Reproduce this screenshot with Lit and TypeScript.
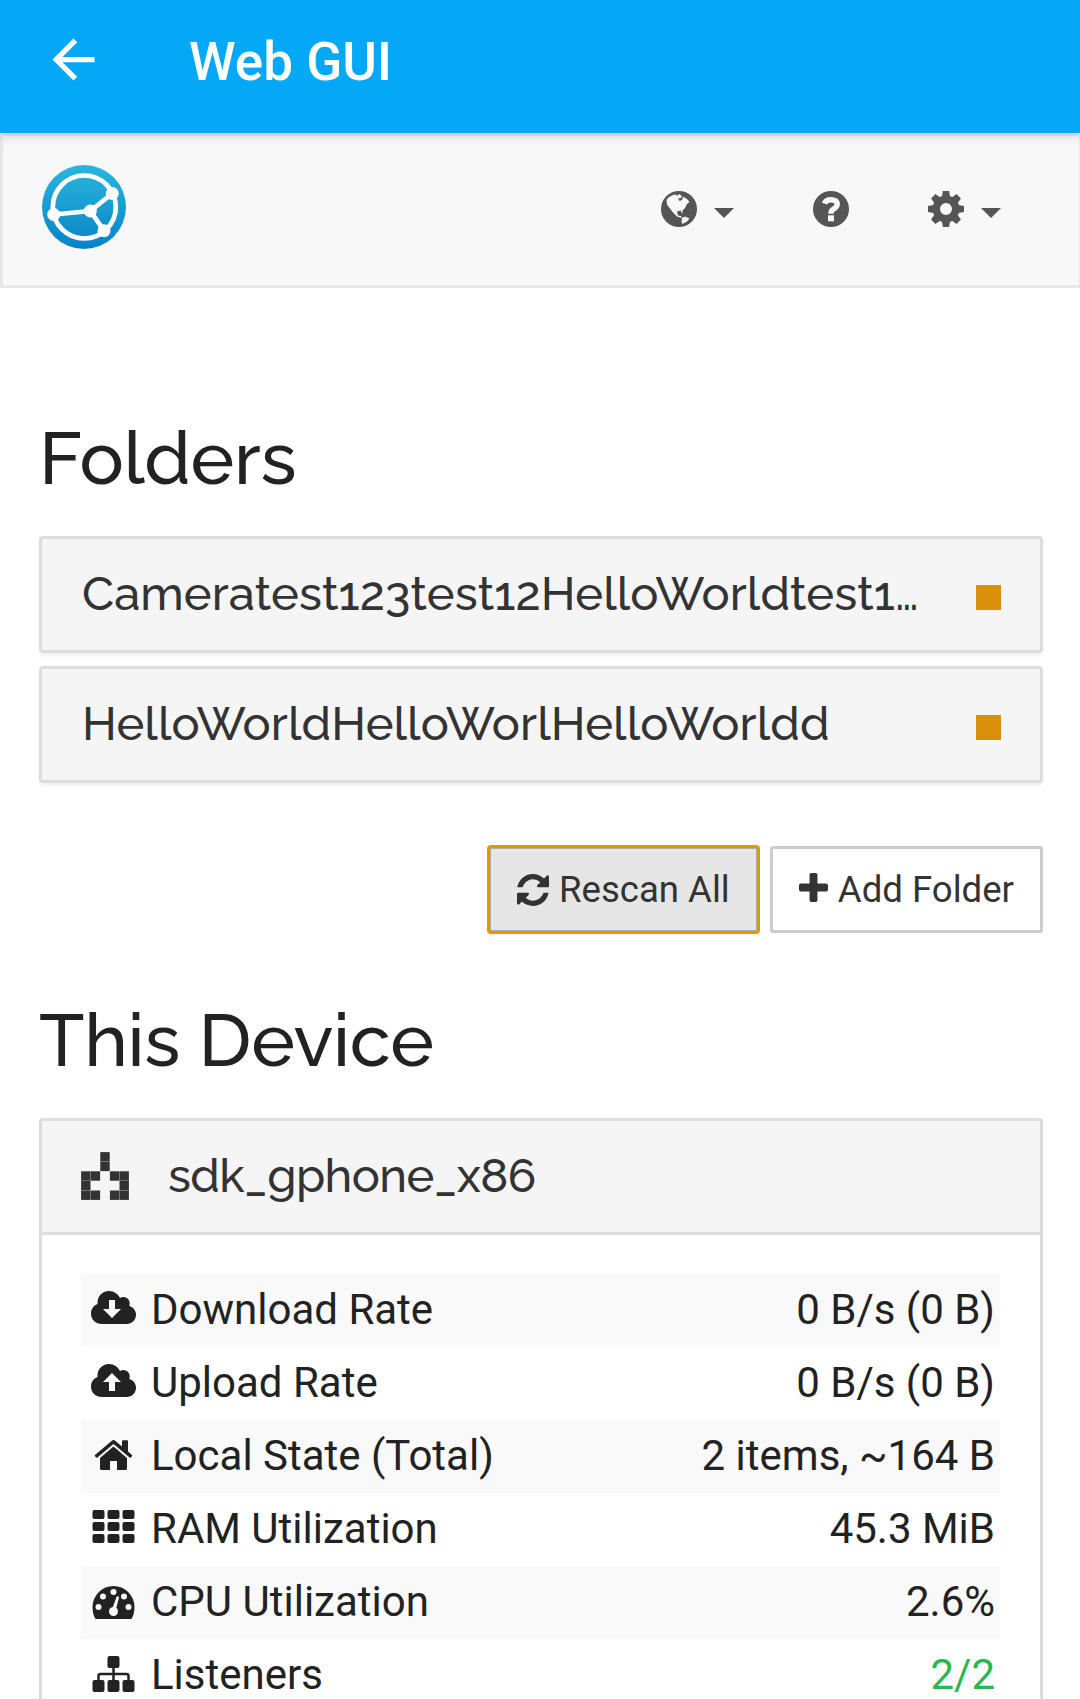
import { LitElement, html, css, svg } from "lit";
import { customElement } from "lit/decorators.js";

const icons: Record<string, [string, string, unknown]> = {
  back: ["0 0 24 24", "back", svg`<path d="M20 11H7.83l5.59-5.59L12 4l-8 8 8 8 1.41-1.41L7.83 13H20z"/>`],
  globe: ["0 0 36 36", "nav-icon", svg`<circle cx="18" cy="18" r="18"/><path class="cut" d="M5.500 9L8 6l4-2 3-.5 1 1.500 2-2 3 2-1 2-3 .5 1.500 2.500 2.500-1 1-3.500 4 2.500 2.500 3L26 13l-2 4-2.500 2.500 0 3.500-2-3.500-3.500 1 1 4 3 .5 1 2-5-1.500-4-4-3-4-3-4zM21 27l3-1.500 4.500 2-2.500 3-4.500 2.500-1-2z"/>`],
  help: ["0 0 36 36", "nav-icon", svg`<circle cx="18" cy="18" r="18"/><path class="cut-line" d="M11.500 12.700c1-3 3.300-4 6.200-4 4 0 6.500 1.600 6.500 4.500 0 4.500-6.200 4.500-6.200 8.600v1"/><path class="cut" d="M15 24.300h6v6h-6z"/>`],
  gear: ["0 0 36 36", "nav-icon", svg`<circle class="hub" cx="18" cy="18" r="9.700"/>${[0, 45, 90, 135, 180, 225, 270, 315].map(a => svg`<path transform="rotate(${a} 18 18)" d="M13.700 7L14.900 0h6.200l1.200 7z"/>`)}`],
  refresh: ["0 0 1536 1536", "btn-icon", svg`<path d="M1511 928q0 5-1 7-64 268-268 434.500T764 1536q-146 0-282.500-55T238 1324l-129 129q-19 19-45 19t-45-19-19-45V960q0-26 19-45t45-19h448q26 0 45 19t19 45-19 45l-137 137q71 66 161 102t187 36q134 0 250-65t186-179q11-17 53-117 8-23 30-23h192q13 0 22.500 9.500t9.500 22.500zm25-800v448q0 26-19 45t-45 19h-448q-26 0-45-19t-19-45 19-45l138-138Q969 256 768 256q-134 0-250 65T332 500q-11 17-53 117-8 23-30 23H50q-13 0-22.500-9.500T18 608v-7q65-268 270-434.500T768 0q146 0 284 55.500T1297 212l130-129q19-19 45-19t45 19 19 45z"/>`],
  plus: ["0 0 1408 1408", "plus-icon", svg`<path d="M1408 608v192q0 40-28 68t-68 28H896v416q0 40-28 68t-68 28H608q-40 0-68-28t-28-68V896H96q-40 0-68-28T0 800V608q0-40 28-68t68-28h416V96q0-40 28-68t68-28h192q40 0 68 28t28 68v416h416q40 0 68 28t28 68z"/>`],
  down: ["0 0 45 33", "row-icon", svg`<path d="M11 33C4.500 33 0 28.500 0 22.500c0-4.500 2.500-8 6.500-9.500C6 5.500 11 0 18 0c5 0 9 3 11 7 5.500-3 11.500 2 9.300 8C42 16 45 19.500 45 23.500 45 29 41 33 35.500 33z"/><path class="cut" d="M18 9h6v9h6l-9 9-9-9h6z"/>`],
  up: ["0 0 45 33", "row-icon", svg`<path d="M11 33C4.500 33 0 28.500 0 22.500c0-4.500 2.500-8 6.500-9.500C6 5.500 11 0 18 0c5 0 9 3 11 7 5.500-3 11.500 2 9.300 8C42 16 45 19.500 45 23.500 45 29 41 33 35.500 33z"/><path class="cut" d="M18 27h6v-9h6l-9-9-9 9h6z"/>`],
  home: ["0 0 45 33", "row-icon low", svg`<path d="M22.500 6.500L36 18v10.500q0 1.500-1.500 1.500H26v-9h-7v9h-8.500Q9 30 9 28.500V18z"/><path d="M20.800.700q1.700-1.300 3.400 0L31 6.500V1q0-.8.800-.8h4.400q.8 0 .8.800v10.500l4 3.500q.6.600 0 1.200L39.800 17.500q-.6.500-1.200 0L22.500 4 6.400 17.500q-.6.500-1.200 0L4 16.200q-.6-.6 0-1.200z"/>`],
  grid: ["0 0 45 33", "row-icon", [0, 12, 24].map(y => [1.500, 16.500, 31.500].map(x => svg`<rect x=${x} y=${y} width="12" height="9" rx="2"/>`))],
  gauge: ["0 0 45 33", "row-icon low", svg`<path d="M4.500 33Q1.500 28 1.500 21a21 21 0 0 1 42 0q0 7-3 12z"/><g class="cut"><circle cx="7.500" cy="21" r="3"/><circle cx="12" cy="10.500" r="3"/><circle cx="22.500" cy="6" r="3"/><circle cx="33" cy="10.500" r="3"/><circle cx="37.500" cy="21" r="3"/><circle cx="22.500" cy="25.500" r="4.500"/><path d="M21.500 22l4-11q.5-1 1.500-.7t1 1.500L25 23z"/></g>`],
  tree: ["0 0 45 36", "row-icon tall", svg`<rect x="16.500" width="12" height="12" rx="2"/><rect x="1.500" y="24" width="12" height="12" rx="2"/><rect x="16.500" y="24" width="12" height="12" rx="2"/><rect x="31.500" y="24" width="12" height="12" rx="2"/><path class="wire" d="M22.500 11v14M7.500 25v-5q0-2 2-2h26q2 0 2 2v5"/>`],
  logo: ["0 0 84 84", "logo", svg`<defs><linearGradient id="sky" x1="0" y1="0" x2="0" y2="1"><stop offset="0" stop-color="#29b7dc"/><stop offset="1" stop-color="#0882c8"/></linearGradient></defs><circle cx="42" cy="42" r="42" fill="url(#sky)"/><g class="net"><circle cx="42.300" cy="42" r="31.500"/><path d="M11.700 49.500L48.300 46l22-17.500M48.300 46L62 65.700"/></g><g class="dots"><circle cx="11.700" cy="49.500" r="6.500"/><circle cx="48.300" cy="46" r="6.500"/><circle cx="70.300" cy="28.500" r="6.500"/><circle cx="62" cy="65.700" r="6.500"/></g>`],
  ident: ["0 0 48 48", "ident", [[2, 0], [2, 1], [0, 2], [1, 2], [3, 2], [4, 2], [0, 3], [4, 3], [0, 4], [1, 4], [3, 4], [4, 4]].map(([c, r]) => svg`<rect x=${c * 9.600 + 0.100} y=${r * 9.600 + 0.100} width="9.400" height="9.400"/>`)],
};

const icon = (name: string) => {
  const [box, cls, body] = icons[name];
  return html`<svg class=${cls} viewBox=${box} aria-hidden="true">${body}</svg>`;
};

const rows = [
  ["down", "Download Rate", "0 B/s (0 B)"],
  ["up", "Upload Rate", "0 B/s (0 B)"],
  ["home", "Local State (Total)", "2 items, ~164 B"],
  ["grid", "RAM Utilization", "45.3 MiB"],
  ["gauge", "CPU Utilization", "2.6%"],
  ["tree", "Listeners", "2/2"],
];

@customElement("app-root")
export class AppRoot extends LitElement {
  static styles = css`
    :host { display: block; height: 1699px; overflow: hidden; background: #fff; color: #222; font-family: Roboto, sans-serif; font-size: 42px; }
    * { box-sizing: border-box; }
    svg { display: block; fill: currentColor; flex: none; overflow: visible; }
    h1 { margin: 0; font-weight: 500; }
    .appbar { height: 133px; background: #04a8f7; color: #fff; display: flex; align-items: center; padding: 0 42px 14px; position: relative; box-shadow: 0 3px 10px rgba(0,0,0,.17); }
    .back { width: 63px; height: 63px; }
    .title { font-size: 53px; font-weight: 500; margin-left: 84px; line-height: 62px; padding-top: 5px; }
    .nav { height: 155px; background: #f8f8f8; border: 3px solid #e7e7e7; border-right-width: 1px; display: flex; align-items: flex-start; padding: 29px 78px 0 39px; color: #555; }
    .logo { width: 84px; height: 84px; }
    .net { fill: none; stroke: #fff; stroke-width: 4.700px; }
    .dots { fill: #fff; }
    .menu { margin-left: auto; display: flex; align-items: center; padding-top: 26px; }
    .nav-icon { width: 36px; height: 36px; }
    .hub { fill: none; stroke: currentColor; stroke-width: 7.400px; }
    .cut { fill: #f8f8f8; }
    .cut-line { fill: none; stroke: #f8f8f8; stroke-width: 5.500px; }
    .caret { border: 10.500px solid transparent; border-top-color: #555; border-bottom: 0; margin: 7px 0 0 17px; }
    .nav-icon + .nav-icon, .caret + .nav-icon { margin-left: 79px; }
    .content { padding: 0 37px 0 39px; }
    h1 { font-family: Raleway, Lato, sans-serif; font-size: 74px; letter-spacing: -0.300px; line-height: 84px; padding-top: 128px; }
    h1.device { padding-top: 65px; }
    .panel { border: 3px solid #ddd; border-radius: 4px; box-shadow: 0 3px 3px rgba(0,0,0,.05); background: #f5f5f5; margin-bottom: 13px; height: 117px; display: flex; align-items: center; padding: 0 39px 1px 40px; color: #333; }
    .first { margin-top: 36px; }
    .name { font-family: Raleway, Lato, sans-serif; font-weight: 500; font-size: 47px; letter-spacing: 0.090px; line-height: 56px; white-space: nowrap; }
    .state { width: 25px; height: 25px; background: #d9900d; margin: 7px 0 0 auto; }
    .actions { display: flex; justify-content: flex-end; gap: 11px; margin-top: 63px; }
    .btn { height: 87px; border: 3px solid #ccc; border-radius: 3px; background: #fff; color: #333; font-size: 36.600px; display: flex; align-items: center; padding: 0 26px; }
    .active { background: #e6e6e6; border-color: #adadad; outline: 3px solid #e59700; outline-offset: -2px; }
    .btn-icon { width: 32px; height: 32px; margin-right: 10px; }
    .plus-icon { width: 29px; height: 29px; margin: 0 10px 4px 0; }
    .card { border: 3px solid #ddd; border-radius: 4px; margin-top: 36px; height: 700px; }
    .head { height: 114px; background: #f5f5f5; border-bottom: 3px solid #ddd; color: #333; padding: 0 39px 2px; display: flex; align-items: center; }
    .ident { width: 48px; height: 48px; }
    .head .name { margin-left: 39px; letter-spacing: -0.580px; }
    .table { padding: 39px 40px 0 39px; }
    .row { height: 73px; display: flex; align-items: flex-start; padding: 0 5px 0 10px; --bg: #fff; background: var(--bg); }
    .row:nth-child(odd) { --bg: #f9f9f9; }
    .row .cut { fill: var(--bg); }
    .row-icon { width: 45px; height: 33px; margin: 17px 15px 0 0; }
    .low { margin-top: 20px; }
    .tall { height: 36px; }
    .wire { fill: none; stroke: currentColor; stroke-width: 2.500px; }
    .label, .value { margin-top: 11px; line-height: 49px; }
    .value { margin-left: auto; }
    .row:last-child .value { color: #29b74e; }
  `;

  render() {
    return html`
      <header class="appbar">${icon("back")}<div class="title">Web GUI</div></header>
      <nav class="nav">${icon("logo")}
        <div class="menu">${icon("globe")}<span class="caret"></span>${icon("help")}${icon("gear")}<span class="caret"></span></div>
      </nav>
      <main class="content">
        <h1>Folders</h1>
        <div class="panel first"><span class="name">Cameratest123test12HelloWorldtest1…</span><span class="state"></span></div>
        <div class="panel"><span class="name">HelloWorldHelloWorlHelloWorldd</span><span class="state"></span></div>
        <div class="actions">
          <div class="btn active">${icon("refresh")}<span>Rescan All</span></div>
          <div class="btn">${icon("plus")}<span>Add Folder</span></div>
        </div>
        <h1 class="device">This Device</h1>
        <section class="card">
          <div class="head">${icon("ident")}<span class="name">sdk_gphone_x86</span></div>
          <div class="table">
            ${rows.map(([i, label, value]) => html`<div class="row">${icon(i)}<span class="label">${label}</span><span class="value">${value}</span></div>`)}
          </div>
        </section>
      </main>`;
  }
}
